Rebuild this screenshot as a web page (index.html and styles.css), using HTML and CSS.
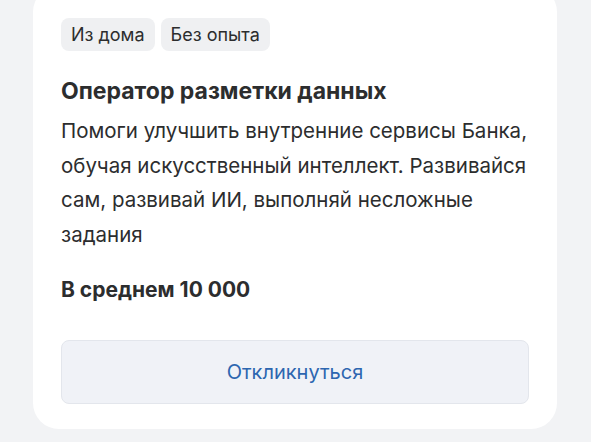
FILE: index.html
```html
<!DOCTYPE html>
<html lang="ru">
<head>
<meta charset="utf-8">
<link rel="stylesheet" href="styles.css">
</head>
<body>
<div class="card">
  <div class="tags">
    <span class="tag">Из дома</span>
    <span class="tag">Без опыта</span>
  </div>
  <h2 class="title">Оператор разметки данных</h2>
  <p class="desc">Помоги улучшить внутренние сервисы Банка, обучая искусственный интеллект. Развивайся сам, развивай ИИ, выполняй несложные задания</p>
  <p class="salary">В среднем 10 000</p>
  <button class="btn">Откликнуться</button>
</div>
</body>
</html>
```
FILE: styles.css
```css
* { box-sizing: border-box; }
html, body { margin: 0; padding: 0; }
body {
  background: #f2f3f5;
  font-family: Inter, "Noto Sans", sans-serif;
  color: #2c2d2e;
  width: 591px;
  height: 442px;
  overflow: hidden;
}
.card {
  margin: -14px 0 0 33px;
  width: 524px;
  background: #fff;
  border-radius: 26px;
  padding: 32px 28px 25px;
  display: flex;
  flex-direction: column;
}
.tags { display: flex; gap: 6px; }
.tag {
  background: #eff0f2;
  border-radius: 8px;
  height: 33px;
  padding: 0 10px;
  display: flex;
  align-items: center;
  font-size: 18px;
  color: #2c2d2e;
}
.title {
  margin: 26px 0 0;
  font-size: 23px;
  font-weight: 700;
  line-height: 28px;
}
.desc {
  margin: 9px 0 0;
  font-size: 20.5px;
  line-height: 34.5px;
  width: 485px;
}
.salary {
  margin: 25px 0 0;
  font-size: 21px;
  font-weight: 700;
  line-height: 26px;
}
.btn {
  margin-top: 37px;
  height: 64px;
  width: 100%;
  background: #f0f2f7;
  border: 1px solid #e3e6ec;
  border-radius: 8px;
  font-family: inherit;
  font-size: 20px;
  color: #2d66b0;
}
```
